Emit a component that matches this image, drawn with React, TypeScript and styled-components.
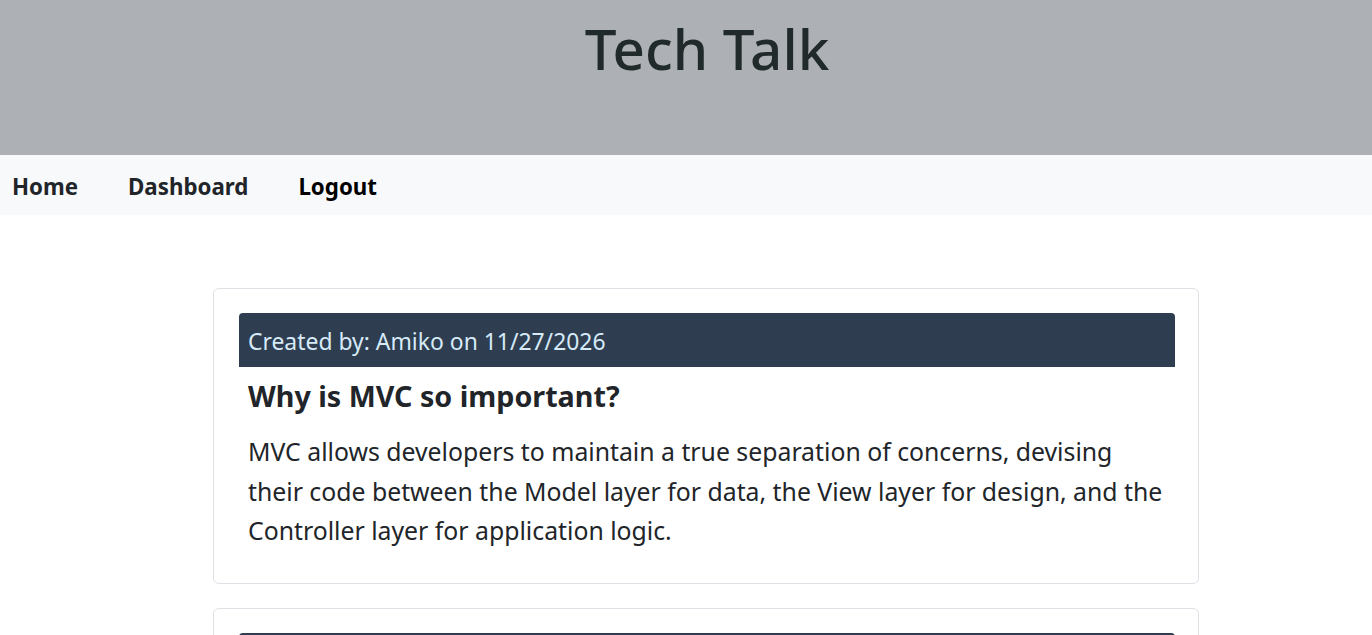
import React from "react";
import styled, { createGlobalStyle } from "styled-components";

const Global = createGlobalStyle`
  html, body { margin: 0; padding: 0; background: #fff; }
  body { font-family: "Noto Sans", "Open Sans", sans-serif; color: #212529; }
  * { box-sizing: border-box; }
`;

const Header = styled.header`
  height: 155px;
  background: #adb1b5;
  display: flex;
  justify-content: center;
  padding: 15px 0 0 42px;
`;

const Title = styled.h1`
  margin: 0;
  font-size: 56.5px;
  font-weight: 500;
  line-height: 1.2;
  color: #212a2a;
`;

const Nav = styled.nav`
  height: 60px;
  background: #f8f9fa;
  display: flex;
  align-items: center;
  padding: 3px 0 0 12px;
  gap: 50px;
`;

const NavLink = styled.a<{ $dark?: boolean }>`
  font-size: 22.3px;
  font-weight: 700;
  color: ${(p) => (p.$dark ? "#000" : "#212529")};
  text-decoration: none;
`;

const Main = styled.main`
  width: 986px;
  margin: 73px 0 0 213px;
  display: flex;
  flex-direction: column;
  gap: 24px;
`;

const Card = styled.article`
  border: 1px solid #dee2e6;
  border-radius: 6px;
  padding: 24px 23px 32px 25px;
`;

const CardHead = styled.div`
  background: #2e3e50;
  color: #d6eaf8;
  border-radius: 4px 4px 0 0;
  height: 54px;
  display: flex;
  align-items: center;
  padding: 3px 9px 0;
  font-size: 22.9px;
`;

const PostTitle = styled.h2`
  margin: 10px 9px 0;
  font-size: 28.7px;
  font-weight: 700;
  line-height: 1.3;
  color: #212529;
`;

const PostBody = styled.p`
  margin: 18px 9px 0;
  font-size: 24.8px;
  line-height: 39.5px;
  color: #212529;
`;

const posts = [
  {
    author: "Amiko",
    date: "11/27/2026",
    title: "Why is MVC so important?",
    body:
      "MVC allows developers to maintain a true separation of concerns, devising their code between the Model layer for data, the View layer for design, and the Controller layer for application logic.",
  },
  {
    author: "Amiko",
    date: "11/27/2026",
    title: "Authentication vs. Authorization",
    body:
      "There is a difference between authentication and authorization. Authentication means confirming your own identity, whereas authorization means being allowed access to the system.",
  },
];

export default function App() {
  return (
    <>
      <Global />
      <Header>
        <Title>Tech Talk</Title>
      </Header>
      <Nav>
        <NavLink href="#">Home</NavLink>
        <NavLink href="#">Dashboard</NavLink>
        <NavLink href="#" $dark>Logout</NavLink>
      </Nav>
      <Main>
        {posts.map((p, i) => (
          <Card key={i}>
            <CardHead>
              Created by: {p.author} on {p.date}
            </CardHead>
            <PostTitle>{p.title}</PostTitle>
            <PostBody>{p.body}</PostBody>
          </Card>
        ))}
      </Main>
    </>
  );
}
